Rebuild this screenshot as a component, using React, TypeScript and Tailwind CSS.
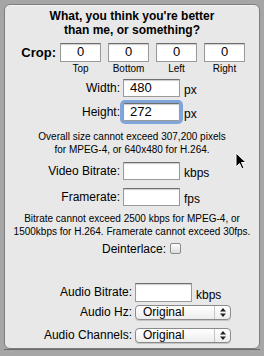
import React from 'react';

const font = { fontFamily: '"Liberation Sans", Arial, sans-serif' };

function TextBox({ value, className, focused }: { value?: string; className?: string; focused?: boolean }) {
  return (
    <div
      className={
        'h-[18px] bg-white border border-[#9b9b9b] border-t-[#6f6f6f] shadow-[inset_0_1px_1px_rgba(0,0,0,0.2)] text-[13px] leading-[16px] text-black ' +
        (focused ? 'ring-[3px] ring-[#7ea6dc] rounded-[2px] ' : '') +
        (className ?? '')
      }
    >
      {value}
    </div>
  );
}

function Row({ label, labelW, children }: { label: string; labelW: string; children: React.ReactNode }) {
  return (
    <div className="flex items-center">
      <div className={'text-right text-[12px] leading-[14px] text-black pr-[3px] ' + labelW}>{label}</div>
      {children}
    </div>
  );
}

function Unit({ text }: { text: string }) {
  return <span className="ml-[4px] self-end text-[12px] leading-[14px] text-black">{text}</span>;
}

function PopUp({ value }: { value: string }) {
  return (
    <div className="flex h-[15px] w-[96px] items-center rounded-[4px] border border-[#8a8a8a] bg-gradient-to-b from-white to-[#ededed] shadow-[0_1px_0_rgba(0,0,0,0.15)]">
      <span className="flex-1 pl-[7px] text-[12px] leading-[13px] text-black">{value}</span>
      <div className="flex h-full w-[16px] flex-col items-center justify-center border-l border-[#c4c4c4]">
        <svg width="6" height="9" viewBox="0 0 6 9">
          <path d="M3 0 L6 3.5 H0 Z" fill="#222" />
          <path d="M0 5.5 H6 L3 9 Z" fill="#222" />
        </svg>
      </div>
    </div>
  );
}

export default function App() {
  return (
    <div className="relative h-[356px] w-[264px] bg-[#a6a6a6] pt-[4px] px-[4px]" style={font}>
      <div className="flex h-[345px] flex-col rounded-[6px] border border-[#7d7d7d] bg-[#e8e8e8] shadow-[inset_0_1px_0_#f4f4f4]">
        <div className="mt-[4px] text-center text-[12px] font-bold leading-[14px] text-black">
          What, you think you're better
          <br />
          than me, or something?
        </div>

        <div className="mt-[6px] flex items-center">
          <span className="w-[55px] text-right text-[13px] font-bold text-black pr-[4px]">Crop:</span>
          <div className="flex gap-[7px]">
            {['Top', 'Bottom', 'Left', 'Right'].map((t) => (
              <div key={t} className="flex w-[41px] flex-col items-center">
                <TextBox value="0" className="h-[19px] w-[41px] text-center" />
              </div>
            ))}
          </div>
        </div>
        <div className="flex pl-[55px] gap-[7px]">
          {['Top', 'Bottom', 'Left', 'Right'].map((t) => (
            <span key={t} className="w-[41px] text-center text-[10px] leading-[12px] text-black">
              {t}
            </span>
          ))}
        </div>

        <div className="mt-[4px] flex flex-col gap-[6px]">
          <Row label="Width:" labelW="w-[118px]">
            <TextBox value="480" className="w-[57px] pl-[6px]" />
            <Unit text="px" />
          </Row>
          <Row label="Height:" labelW="w-[118px]">
            <TextBox value="272" focused className="w-[57px] pl-[6px]" />
            <Unit text="px" />
          </Row>
        </div>

        <div className="mt-[9px] text-center text-[10px] leading-[13px] text-black">
          Overall size cannot exceed 307,200 pixels
          <br />
          for MPEG-4, or 640x480 for H.264.
        </div>

        <div className="mt-[6px] flex flex-col gap-[8px]">
          <Row label="Video Bitrate:" labelW="w-[118px]">
            <TextBox className="w-[57px]" />
            <Unit text="kbps" />
          </Row>
          <Row label="Framerate:" labelW="w-[118px]">
            <TextBox className="w-[57px]" />
            <Unit text="fps" />
          </Row>
        </div>

        <div className="mt-[6px] text-center text-[10px] leading-[13px] text-black">
          Bitrate cannot exceed 2500 kbps for MPEG-4, or
          <br />
          1500kbps for H.264. Framerate cannot exceed 30fps.
        </div>

        <div className="mt-[2px] flex items-center">
          <span className="w-[165px] text-right text-[12px] text-black pr-[4px]">Deinterlace:</span>
          <div className="h-[11px] w-[11px] rounded-[2px] border border-[#8a8a8a] bg-gradient-to-b from-white to-[#dcdcdc]" />
        </div>

        <div className="mt-[25px] flex flex-col">
          <Row label="Audio Bitrate:" labelW="w-[130px]">
            <TextBox className="h-[19px] w-[57px]" />
            <Unit text="kbps" />
          </Row>
          <div className="mt-[3px]">
            <Row label="Audio Hz:" labelW="w-[130px]">
              <PopUp value="Original" />
            </Row>
          </div>
          <div className="mt-[8px]">
            <Row label="Audio Channels:" labelW="w-[130px]">
              <PopUp value="Original" />
            </Row>
          </div>
        </div>
      </div>
      <div className="h-[1px] bg-[#6a6a6a]" />

      <svg className="absolute left-[235px] top-[152px]" width="12" height="19" viewBox="0 0 12 19">
        <path d="M1 1 L1 15 L4.5 11.5 L7 17 L9 16 L6.5 10.5 L11 10.5 Z" fill="#000" stroke="#fff" strokeWidth="1" />
      </svg>
    </div>
  );
}
